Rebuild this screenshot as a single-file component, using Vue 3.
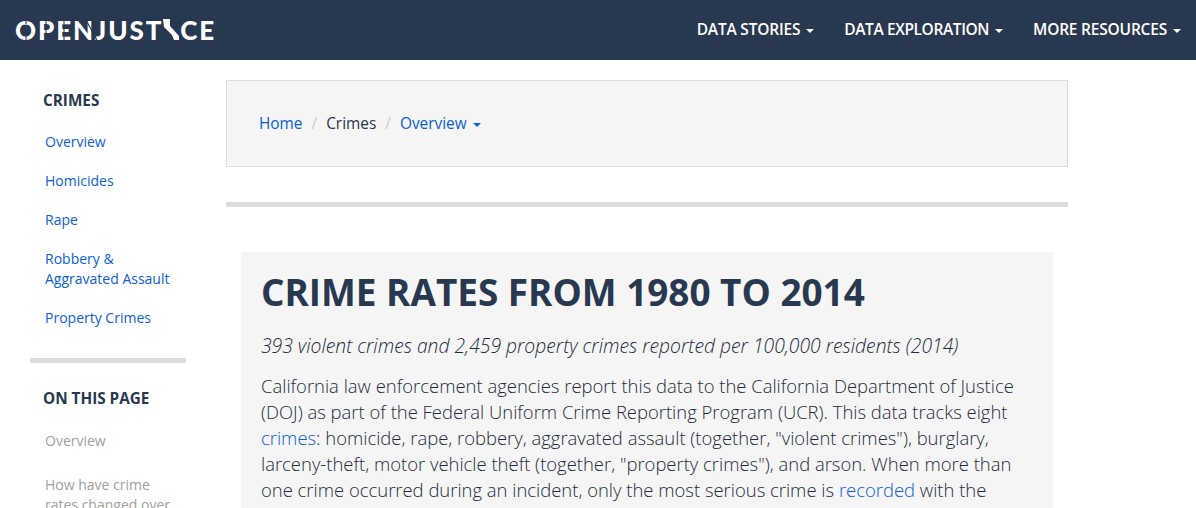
<script setup>
const crimeLinks = ['Overview', 'Homicides', 'Rape', 'Robbery & Aggravated Assault', 'Property Crimes']
const pageLinks = ['Overview', 'How have crime rates changed over time?']
const navItems = ['DATA STORIES', 'DATA EXPLORATION', 'MORE RESOURCES']
</script>

<template>
  <div class="page">
    <header class="navbar">
      <div class="logo">
        <span>OPENJUST</span>
        <svg class="state" viewBox="0 0 18 22" width="18" height="22" aria-hidden="true">
          <path d="M1 0 L8 0 L8 7 L17 17 L17 21 L12 21 L10 16 L2 8 Z" fill="#fff" />
        </svg>
        <span>CE</span>
        <svg class="slits" viewBox="0 0 200 24" width="200" height="24" aria-hidden="true">
          <path d="M11 0V6M11 18V24M31 0V24M49 0V24M71 2L82 22" stroke="#283850" stroke-width="1.1" fill="none" />
        </svg>
      </div>
      <nav class="topnav">
        <a v-for="item in navItems" :key="item" class="toplink">{{ item }}<i class="caret"></i></a>
      </nav>
    </header>
    <div class="body">
      <aside class="side">
        <h4 class="side-title">CRIMES</h4>
        <ul class="side-list">
          <li v-for="l in crimeLinks" :key="l"><a class="blue">{{ l }}</a></li>
        </ul>
        <hr class="side-rule" />
        <h4 class="side-title">ON THIS PAGE</h4>
        <ul class="side-list page-list">
          <li v-for="l in pageLinks" :key="l"><a class="muted">{{ l }}</a></li>
        </ul>
      </aside>
      <main class="main">
        <div class="crumbs">
          <a class="blue">Home</a><span class="sep">/</span><span>Crimes</span><span class="sep">/</span><a class="blue">Overview<i class="caret"></i></a>
        </div>
        <hr class="rule" />
        <section class="card">
          <h1>CRIME RATES FROM 1980 TO 2014</h1>
          <p class="lede">393 violent crimes and 2,459 property crimes reported per 100,000 residents (2014)</p>
          <p class="copy">California law enforcement agencies report this data to the California Department of Justice (DOJ) as part of the Federal Uniform Crime Reporting Program (UCR). This data tracks eight <a class="blue">crimes</a>: homicide, rape, robbery, aggravated assault (together, "violent crimes"), burglary, larceny-theft, motor vehicle theft (together, "property crimes"), and arson. When more than one crime occurred during an incident, only the most serious crime is <a class="blue">recorded</a> with the exception of arson.</p>
        </section>
      </main>
    </div>
  </div>
</template>

<style>
html, body { margin: 0; overflow: hidden; }
</style>

<style scoped>
.page { width: 1196px; height: 508px; overflow: hidden; background: #fff; font-family: "Open Sans", sans-serif; color: #283850; }
.navbar { height: 60px; background: #283850; display: flex; align-items: center; justify-content: space-between; padding: 0 15px; box-sizing: border-box; }
.logo { position: relative; display: flex; align-items: center; color: #fff; font-family: "Lato", sans-serif; font-weight: 900; font-size: 26px; letter-spacing: 1.9px; line-height: 1; }
.state { margin: 0 0 0 -1px; }
.slits { position: absolute; left: 0; top: 1px; }
.topnav { display: flex; gap: 30px; margin-top: -2px; }
.toplink { color: #fff; font-size: 15.5px; font-weight: 600; letter-spacing: -0.2px; }
.toplink:nth-child(2) { letter-spacing: -0.39px; }
.caret { display: inline-block; margin-left: 6px; vertical-align: middle; border-top: 4px solid currentColor; border-left: 4px solid transparent; border-right: 4px solid transparent; }
.body { display: flex; }
.side { width: 156px; margin-left: 30px; flex: none; padding-top: 30px; }
.side-title { margin: 0 0 0 13px; font-size: 15.3px; font-weight: 700; line-height: 20px; color: #283850; }
.side-list { list-style: none; margin: 22px 0 0; padding: 0 0 0 15px; font-size: 14px; line-height: 20px; }
.side-list li { margin-bottom: 19px; }
.page-list { margin-top: 23px; }
.page-list li { margin-bottom: 24px; }
.side-rule { margin: 30px 0 25px; border: 0; height: 5px; background: #dcdcdc; }
.blue { color: #0b60d8; }
.muted { color: #a0a0a0; }
.main { width: 842px; margin-left: 40px; padding-top: 20px; flex: none; }
.crumbs { height: 87px; box-sizing: border-box; background: #f5f5f5; border: 1px solid #ddd; padding: 0 32px; display: flex; align-items: center; font-size: 15.4px; color: #283850; }
.sep { color: #ccc; padding: 0 9px; }
.rule { margin: 35px 0 45px; border: 0; height: 5px; background: #dcdcdc; }
.card { margin: 0 15px; padding: 15px 20px; background: #f5f5f5; }
h1 { margin: 0; font-size: 36.9px; line-height: 50px; font-weight: 700; color: #283850; }
.lede { margin: 16px 0 0; font-size: 19.3px; line-height: 26px; font-weight: 300; font-style: italic; color: #1f2c40; }
.copy { margin: 14px 0 0; font-size: 18.46px; line-height: 26px; font-weight: 300; color: #1f2c40; }
</style>
